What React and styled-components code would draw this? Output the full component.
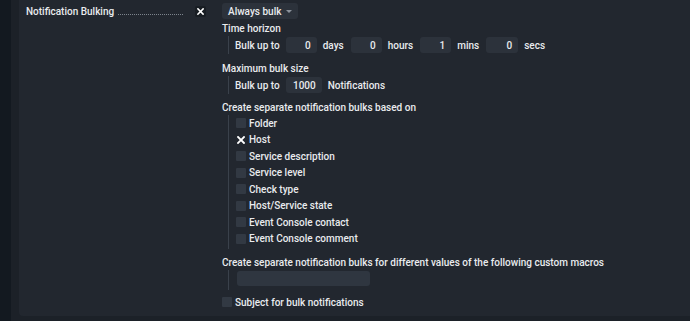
import styled, { createGlobalStyle } from 'styled-components';

const Global = createGlobalStyle`
  html, body {
    margin: 0;
    background: #131920;
  }
  body {
    font-family: Roboto, "Liberation Sans", sans-serif;
    font-size: 10px;
    color: #e9ebee;
  }
`;

/* ── shell ── */
const Shell = styled.div`
  display: flex;
  height: 321px;
  overflow: hidden;
`;

const Rail = styled.div`
  width: 11px;
  background: #131920;
  flex-shrink: 0;
`;

const Back = styled.div`
  flex: 1;
  background: #1c2128;
  padding-left: 8px;
  padding-bottom: 5px;
  display: flex;
`;

const Panel = styled.div`
  flex: 1;
  background: #22272f;
  border-bottom-left-radius: 4px;
  display: grid;
  grid-template-columns: 196px 1fr;
  align-items: start;
  padding: 3px 0 0 7px;
`;

/* ── left label cell ── */
const LabelCell = styled.div`
  display: flex;
  align-items: center;
  height: 16px;
`;

const Title = styled.span`
  font-weight: 500;
  white-space: nowrap;
`;

const Dots = styled.span`
  width: 66px;
  height: 1px;
  align-self: flex-end;
  margin: 0 0 4px 4px;
  background-image: linear-gradient(to right, #7d848d 50%, transparent 50%);
  background-size: 2px 1px;
  background-repeat: repeat-x;
`;

const CloseBox = styled.span`
  margin: 0 16px 0 auto;
  width: 11px;
  height: 11px;
  border-radius: 2px;
  background: #181d23;
  display: flex;
  align-items: center;
  justify-content: center;
`;

/* ── right value cell ── */
const ValueCell = styled.div`
  display: flex;
  flex-direction: column;
`;

const Select = styled.div`
  align-self: flex-start;
  display: flex;
  align-items: center;
  gap: 5px;
  height: 16px;
  padding: 0 6px;
  background: #2c323b;
  border-radius: 3px;
  font-weight: 500;
`;

const Caret = styled.span`
  width: 0;
  height: 0;
  border-left: 3px solid transparent;
  border-right: 3px solid transparent;
  border-top: 3px solid #8b929b;
  margin-top: 1px;
`;

const Heading = styled.div`
  font-weight: 500;
  height: 14px;
  line-height: 14px;
  margin-top: ${({ $gap }) => $gap}px;
`;

const Nested = styled.div`
  margin-left: 6px;
  border-left: 1px solid #3a414b;
  padding-left: 6px;
  display: flex;
  flex-direction: column;
  padding-top: ${({ $pt }) => $pt || 0}px;
  padding-bottom: ${({ $pb }) => $pb || 0}px;
`;

const Line = styled.div`
  display: flex;
  align-items: center;
  height: 18px;
  font-weight: 500;
`;

const Lead = styled.span`
  margin-right: 6px;
`;

const Word = styled.span`
  margin: 0 7px 0 6px;
`;

const NumInput = styled.span`
  width: ${({ $w }) => $w}px;
  height: 16px;
  box-sizing: border-box;
  padding-right: 6px;
  background: #2c323b;
  border-radius: 3px;
  display: flex;
  align-items: center;
  justify-content: flex-end;
  font-weight: 500;
`;

const CheckRow = styled.div`
  display: flex;
  align-items: center;
  gap: 3px;
  height: 16.5px;
  font-weight: 500;
  margin-left: ${({ $ml }) => $ml || 0}px;
  margin-top: ${({ $mt }) => $mt || 0}px;
`;

const Box = styled.span`
  width: 10px;
  height: 10px;
  border-radius: 1px;
  background: ${({ $on }) => ($on ? 'transparent' : '#323943')};
  display: flex;
  align-items: center;
  justify-content: center;
  flex-shrink: 0;
`;

const TextInput = styled.span`
  width: 133px;
  height: 15px;
  background: #2f3640;
  border-radius: 3px;
  margin: 1px 0 4px 2px;
`;

const Cross = ({ size = 8 }) => (
  <svg width={size} height={size} viewBox="0 0 8 8">
    <path d="M1 1 L7 7 M7 1 L1 7" stroke="#fff" strokeWidth="1.8" strokeLinecap="square" />
  </svg>
);

const bulkOn = [
  ['Folder', false],
  ['Host', true],
  ['Service description', false],
  ['Service level', false],
  ['Check type', false],
  ['Host/Service state', false],
  ['Event Console contact', false],
  ['Event Console comment', false],
];

export default function App() {
  return (
    <>
      <Global />
      <Shell>
        <Rail />
        <Back>
          <Panel>
            <LabelCell>
              <Title>Notification Bulking</Title>
              <Dots />
              <CloseBox>
                <Cross size={7} />
              </CloseBox>
            </LabelCell>

            <ValueCell>
              <Select>
                Always bulk
                <Caret />
              </Select>

              <Heading $gap={3}>Time horizon</Heading>
              <Nested>
                <Line>
                  <Lead>Bulk up to</Lead>
                  <NumInput $w={31}>0</NumInput>
                  <Word>days</Word>
                  <NumInput $w={31}>0</NumInput>
                  <Word>hours</Word>
                  <NumInput $w={31}>1</NumInput>
                  <Word>mins</Word>
                  <NumInput $w={32}>0</NumInput>
                  <Word>secs</Word>
                </Line>
              </Nested>

              <Heading $gap={8}>Maximum bulk size</Heading>
              <Nested>
                <Line>
                  <Lead>Bulk up to</Lead>
                  <NumInput $w={36}>1000</NumInput>
                  <Word>Notifications</Word>
                </Line>
              </Nested>

              <Heading $gap={7}>Create separate notification bulks based on</Heading>
              <Nested $pb={2}>
                {bulkOn.map(([label, on]) => (
                  <CheckRow key={label} $ml={1}>
                    <Box $on={on}>{on && <Cross size={8} />}</Box>
                    {label}
                  </CheckRow>
                ))}
              </Nested>

              <Heading $gap={7}>
                Create separate notification bulks for different values of the following custom macros
              </Heading>
              <Nested>
                <TextInput />
              </Nested>

              <CheckRow $mt={4}>
                <Box />
                Subject for bulk notifications
              </CheckRow>
            </ValueCell>
          </Panel>
        </Back>
      </Shell>
    </>
  );
}
